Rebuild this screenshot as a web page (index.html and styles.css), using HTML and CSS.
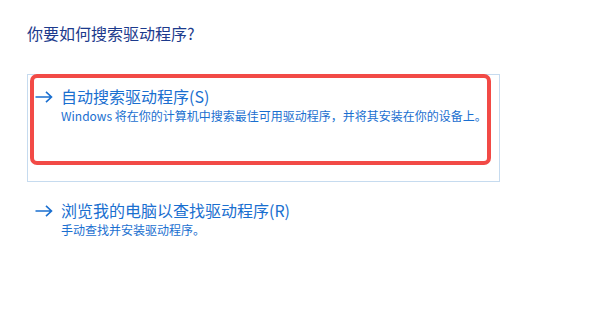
FILE: index.html
```html
<!DOCTYPE html>
<html lang="zh-CN">
<head>
<meta charset="utf-8">
<title>更新驱动程序</title>
<link rel="stylesheet" href="styles.css">
</head>
<body>
<div class="page">
  <h1 class="heading">你要如何搜索驱动程序?</h1>
  <div class="options">
    <div class="option option-hover">
      <svg class="arrow" width="18" height="12" viewBox="0 0 18 12"><path d="M0.5 6H16.5M11 0.8L16.5 6L11 11.2" fill="none" stroke="#1a6fd0" stroke-width="1.6"/></svg>
      <div class="texts">
        <div class="title">自动搜索驱动程序(S)</div>
        <div class="desc">Windows 将在你的计算机中搜索最佳可用驱动程序，并将其安装在你的设备上。</div>
      </div>
      <div class="highlight"></div>
    </div>
    <div class="option">
      <svg class="arrow" width="18" height="12" viewBox="0 0 18 12"><path d="M0.5 6H16.5M11 0.8L16.5 6L11 11.2" fill="none" stroke="#1a6fd0" stroke-width="1.6"/></svg>
      <div class="texts">
        <div class="title">浏览我的电脑以查找驱动程序(R)</div>
        <div class="desc">手动查找并安装驱动程序。</div>
      </div>
    </div>
  </div>
</div>
</body>
</html>
```
FILE: styles.css
```css
html, body {
  margin: 0;
  padding: 0;
  background: #ffffff;
}
body {
  width: 600px;
  height: 310px;
  overflow: hidden;
  font-family: "Noto Sans CJK SC", "Noto Sans", sans-serif;
}
.page {
  padding: 23px 0 0 27px;
}
.heading {
  margin: 0;
  font-size: 16px;
  font-weight: normal;
  line-height: 20px;
  color: #1c3a8c;
}
.options {
  margin-top: 31px;
  display: flex;
  flex-direction: column;
  gap: 6px;
}
.option {
  position: relative;
  width: 473px;
  height: 108px;
  box-sizing: border-box;
  border: 1px solid transparent;
  padding: 11px 0 0 7px;
  display: flex;
  align-items: flex-start;
}
.option-hover {
  border-color: #c6dbef;
}
.arrow {
  flex: none;
  margin-top: 5px;
  margin-right: 8px;
}
.texts {
  display: flex;
  flex-direction: column;
}
.title {
  font-size: 16px;
  line-height: 20px;
  color: #1a6fd0;
}
.desc {
  margin-top: 2px;
  font-size: 12px;
  line-height: 16px;
  color: #1a6fd0;
}
.highlight {
  position: absolute;
  left: 2px;
  top: -1px;
  width: 461px;
  height: 91px;
  box-sizing: border-box;
  border: 4px solid #f24a46;
  border-radius: 7px;
  pointer-events: none;
}
```
